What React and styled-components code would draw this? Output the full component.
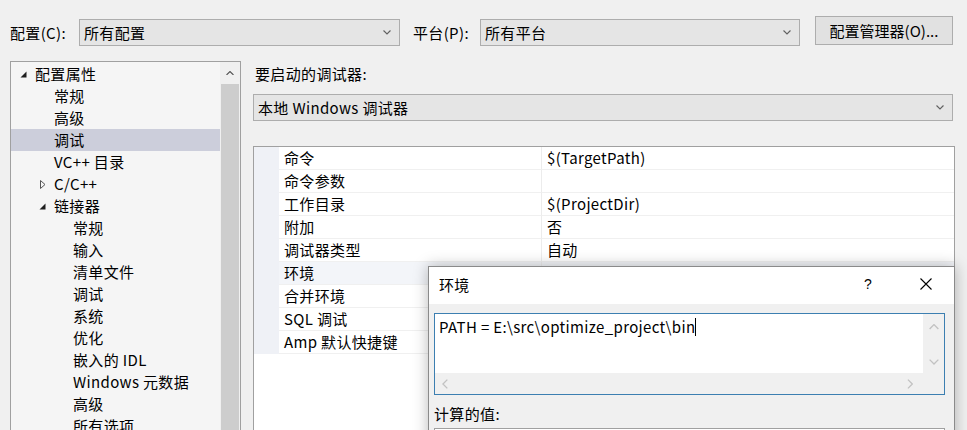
import React from "react";
import styled, { createGlobalStyle } from "styled-components";

const GlobalStyle = createGlobalStyle`
  html, body { margin: 0; padding: 0; }
  body {
    background: #f0f0f0;
    font-family: "Noto Sans CJK SC", "Noto Sans", sans-serif;
    color: #000;
  }
`;

const Page = styled.div`
  position: relative;
  width: 967px;
  height: 430px;
  overflow: hidden;
  background: #f0f0f0;
  font-size: 15px;
  letter-spacing: 0.35px;
  display: flex;
  flex-direction: column;
`;

const TopBar = styled.div`
  display: flex;
  align-items: flex-start;
  height: 61px;
  padding: 16px 0 0 10px;
  box-sizing: border-box;
  flex-shrink: 0;
`;

const Label = styled.div`
  width: ${(p) => p.$w}px;
  margin-left: ${(p) => p.$ml || 0}px;
  margin-top: 3px;
  height: 27px;
  line-height: 27px;
  white-space: nowrap;
`;

const Combo = styled.div`
  width: ${(p) => p.$w}px;
  height: 27px;
  margin-top: ${(p) => p.$mt ?? 3}px;
  box-sizing: border-box;
  background: #e5e5e5;
  border: 1px solid #adadad;
  display: flex;
  align-items: center;
  justify-content: space-between;
  padding: 0 8px 0 4px;
  line-height: 25px;
  white-space: nowrap;
`;

const Button = styled.div`
  width: 138px;
  height: 29px;
  margin-left: 15px;
  box-sizing: border-box;
  background: #e1e1e1;
  border: 1px solid #adadad;
  display: flex;
  align-items: center;
  justify-content: center;
  line-height: 27px;
  letter-spacing: 0;
  white-space: nowrap;
`;

const Main = styled.div`
  flex: 1;
  display: flex;
  padding-left: 10px;
  gap: 12px;
  min-height: 0;
`;

const Tree = styled.div`
  width: 231px;
  flex-shrink: 0;
  box-sizing: border-box;
  border: 1px solid #a0a0a0;
  border-bottom: none;
  background: #f5f5f5;
  display: flex;
`;

const TreeList = styled.div`
  flex: 1;
  padding-top: 1px;
`;

const TreeRow = styled.div`
  height: 22px;
  line-height: 22px;
  display: flex;
  align-items: center;
  padding-left: ${(p) => p.$indent}px;
  background: ${(p) => (p.$selected ? "#cccedb" : "transparent")};
  white-space: nowrap;
  position: relative;
`;

const Arrow = styled.span`
  position: absolute;
  left: ${(p) => p.$x}px;
  top: 0;
  height: 22px;
  display: flex;
  align-items: center;
`;

const ScrollBar = styled.div`
  width: 20px;
  display: flex;
  flex-direction: column;
  background: #f0f0f0;
`;

const ScrollArrow = styled.div`
  height: 22px;
  display: flex;
  align-items: center;
  justify-content: center;
`;

const ScrollThumb = styled.div`
  flex: 1;
  background: #cdcdcd;
  margin: 0 1px;
`;

const Right = styled.div`
  width: 702px;
  display: flex;
  flex-direction: column;
`;

const SectionLabel = styled.div`
  height: 22px;
  line-height: 22px;
  margin-top: 2px;
  padding-left: 2px;
`;

const Grid = styled.div`
  margin-top: 25px;
  flex: 1;
  background: #fff;
  border: 1px solid #a0a0a0;
  border-bottom: none;
  display: grid;
  grid-template-columns: 25px 263px 1fr;
  grid-auto-rows: 23px;
  align-content: start;
`;

const Gutter = styled.div`
  background: #eff1f6;
`;

const Cell = styled.div`
  line-height: 22px;
  border-bottom: 1px solid #f0f0f0;
  padding-left: 5px;
  border-right: ${(p) => (p.$value ? "none" : "1px solid #ececec")};
  background: ${(p) => (p.$hl ? "#f3f5f9" : "#fff")};
  white-space: nowrap;
  overflow: hidden;
`;

const Dialog = styled.div`
  position: absolute;
  left: 428px;
  top: 266px;
  width: 527px;
  height: 200px;
  box-sizing: border-box;
  border: 1px solid #8a8a8a;
  background: #f0f0f0;
  box-shadow: 0 0 14px rgba(0, 0, 0, 0.28);
  display: flex;
  flex-direction: column;
`;

const TitleBar = styled.div`
  height: 37px;
  box-sizing: border-box;
  padding: 0 0 3px 10px;
  background: #fff;
  display: flex;
  align-items: center;
  flex-shrink: 0;
`;

const Title = styled.div`
  flex: 1;
`;

const TitleBtn = styled.div`
  width: ${(p) => p.$w}px;
  height: 34px;
  display: flex;
  align-items: center;
  justify-content: center;
  font-family: "Liberation Sans", sans-serif;
  font-size: 14px;
`;

const DialogBody = styled.div`
  padding: 9px 9px 0 5px;
  display: flex;
  flex-direction: column;
`;

const EditBox = styled.div`
  height: 82px;
  box-sizing: border-box;
  border: 1px solid #3c7fb1;
  display: grid;
  grid-template-columns: 1fr 21px;
  grid-template-rows: 59px 1fr;
  background: #f0f0f0;
`;

const EditText = styled.div`
  background: #fff;
  padding: 3px 0 0 4px;
  line-height: 20px;
  white-space: nowrap;
  display: flex;
  align-items: flex-start;
`;

const Caret = styled.span`
  display: inline-block;
  width: 1px;
  height: 18px;
  margin-top: 1px;
  background: #000;
`;

const VScroll = styled.div`
  display: flex;
  flex-direction: column;
  justify-content: space-between;
  align-items: center;
  padding: 10px 0 8px;
`;

const HScroll = styled.div`
  display: flex;
  justify-content: space-between;
  align-items: center;
  padding: 0 10px 0 7px;
`;

const SubLabel = styled.div`
  margin-top: 8px;
  height: 22px;
  line-height: 22px;
`;

const Below = styled.div`
  margin-top: 3px;
  height: 40px;
  border: 1px solid #a0a0a0;
  background: #fff;
`;

const Chevron = ({ dir = "down", color = "#606060", size = 8 }) => {
  const pts = {
    down: "0.5,0.5 4,4 7.5,0.5",
    up: "0.5,4 4,0.5 7.5,4",
  };
  if (dir === "left" || dir === "right") {
    const p = dir === "left" ? "4,0.5 0.5,4 4,7.5" : "0.5,0.5 4,4 0.5,7.5";
    return (
      <svg width={5 * (size / 8)} height={size} viewBox="0 0 4.5 8">
        <polyline points={p} fill="none" stroke={color} strokeWidth="1.1" />
      </svg>
    );
  }
  return (
    <svg width={size} height={size * 0.56} viewBox="0 0 8 4.5">
      <polyline points={pts[dir]} fill="none" stroke={color} strokeWidth="1.1" />
    </svg>
  );
};

const Expanded = () => (
  <svg width="7" height="7" viewBox="0 0 7 7">
    <polygon points="6.5,0.5 6.5,6.5 0.5,6.5" fill="#1e1e1e" />
  </svg>
);

const Collapsed = () => (
  <svg width="6" height="9" viewBox="0 0 6 9">
    <polygon points="0.5,0.5 5,4.5 0.5,8.5" fill="none" stroke="#555" strokeWidth="1" />
  </svg>
);

const treeItems = [
  { t: "配置属性", lvl: 0, arrow: "e", ax: 9 },
  { t: "常规", lvl: 1 },
  { t: "高级", lvl: 1 },
  { t: "调试", lvl: 1, sel: true },
  { t: "VC++ 目录", lvl: 1 },
  { t: "C/C++", lvl: 1, arrow: "c", ax: 29 },
  { t: "链接器", lvl: 1, arrow: "e", ax: 28 },
  { t: "常规", lvl: 2 },
  { t: "输入", lvl: 2 },
  { t: "清单文件", lvl: 2 },
  { t: "调试", lvl: 2 },
  { t: "系统", lvl: 2 },
  { t: "优化", lvl: 2 },
  { t: "嵌入的 IDL", lvl: 2 },
  { t: "Windows 元数据", lvl: 2 },
  { t: "高级", lvl: 2 },
  { t: "所有选项", lvl: 2 },
];

const indents = [24, 43, 62];

const props = [
  ["命令", "$(TargetPath)"],
  ["命令参数", ""],
  ["工作目录", "$(ProjectDir)"],
  ["附加", "否"],
  ["调试器类型", "自动"],
  ["环境", "", true],
  ["合并环境", ""],
  ["SQL 调试", ""],
  ["Amp 默认快捷键", ""],
];

export default function App() {
  return (
    <>
      <GlobalStyle />
      <Page>
        <TopBar>
          <Label $w={69}>配置(C):</Label>
          <Combo $w={321}>
            <span>所有配置</span>
            <Chevron />
          </Combo>
          <Label $w={67} $ml={13}>平台(P):</Label>
          <Combo $w={320}>
            <span>所有平台</span>
            <Chevron />
          </Combo>
          <Button>配置管理器(O)...</Button>
        </TopBar>
        <Main>
          <Tree>
            <TreeList>
              {treeItems.map((it, i) => (
                <TreeRow key={i} $indent={indents[it.lvl]} $selected={it.sel}>
                  {it.arrow && (
                    <Arrow $x={it.ax}>
                      {it.arrow === "e" ? <Expanded /> : <Collapsed />}
                    </Arrow>
                  )}
                  {it.t}
                </TreeRow>
              ))}
            </TreeList>
            <ScrollBar>
              <ScrollArrow>
                <Chevron dir="up" color="#505050" size={8} />
              </ScrollArrow>
              <ScrollThumb />
            </ScrollBar>
          </Tree>
          <Right>
            <SectionLabel>要启动的调试器:</SectionLabel>
            <Combo $w={700} $mt={9}>
              <span>本地 Windows 调试器</span>
              <Chevron />
            </Combo>
            <Grid>
              {props.map(([k, v, hl], i) => (
                <React.Fragment key={i}>
                  <Gutter />
                  <Cell $hl={hl}>{k}</Cell>
                  <Cell $value $hl={hl}>{v}</Cell>
                </React.Fragment>
              ))}
            </Grid>
          </Right>
        </Main>
        <Dialog>
          <TitleBar>
            <Title>环境</Title>
            <TitleBtn $w={60}>?</TitleBtn>
            <TitleBtn $w={56}>
              <svg width="12" height="12" viewBox="0 0 12 12">
                <path d="M0.5 0.5 L11.5 11.5 M11.5 0.5 L0.5 11.5" stroke="#000" strokeWidth="1.1" />
              </svg>
            </TitleBtn>
          </TitleBar>
          <DialogBody>
            <EditBox>
              <EditText>
                <span>PATH = E:\src\optimize_project\bin</span>
                <Caret />
              </EditText>
              <VScroll>
                <Chevron dir="up" color="#c2c2c2" size={10} />
                <Chevron dir="down" color="#c2c2c2" size={10} />
              </VScroll>
              <HScroll>
                <Chevron dir="left" color="#c2c2c2" size={10} />
                <Chevron dir="right" color="#c2c2c2" size={10} />
              </HScroll>
              <div />
            </EditBox>
            <SubLabel>计算的值:</SubLabel>
            <Below />
          </DialogBody>
        </Dialog>
      </Page>
    </>
  );
}
